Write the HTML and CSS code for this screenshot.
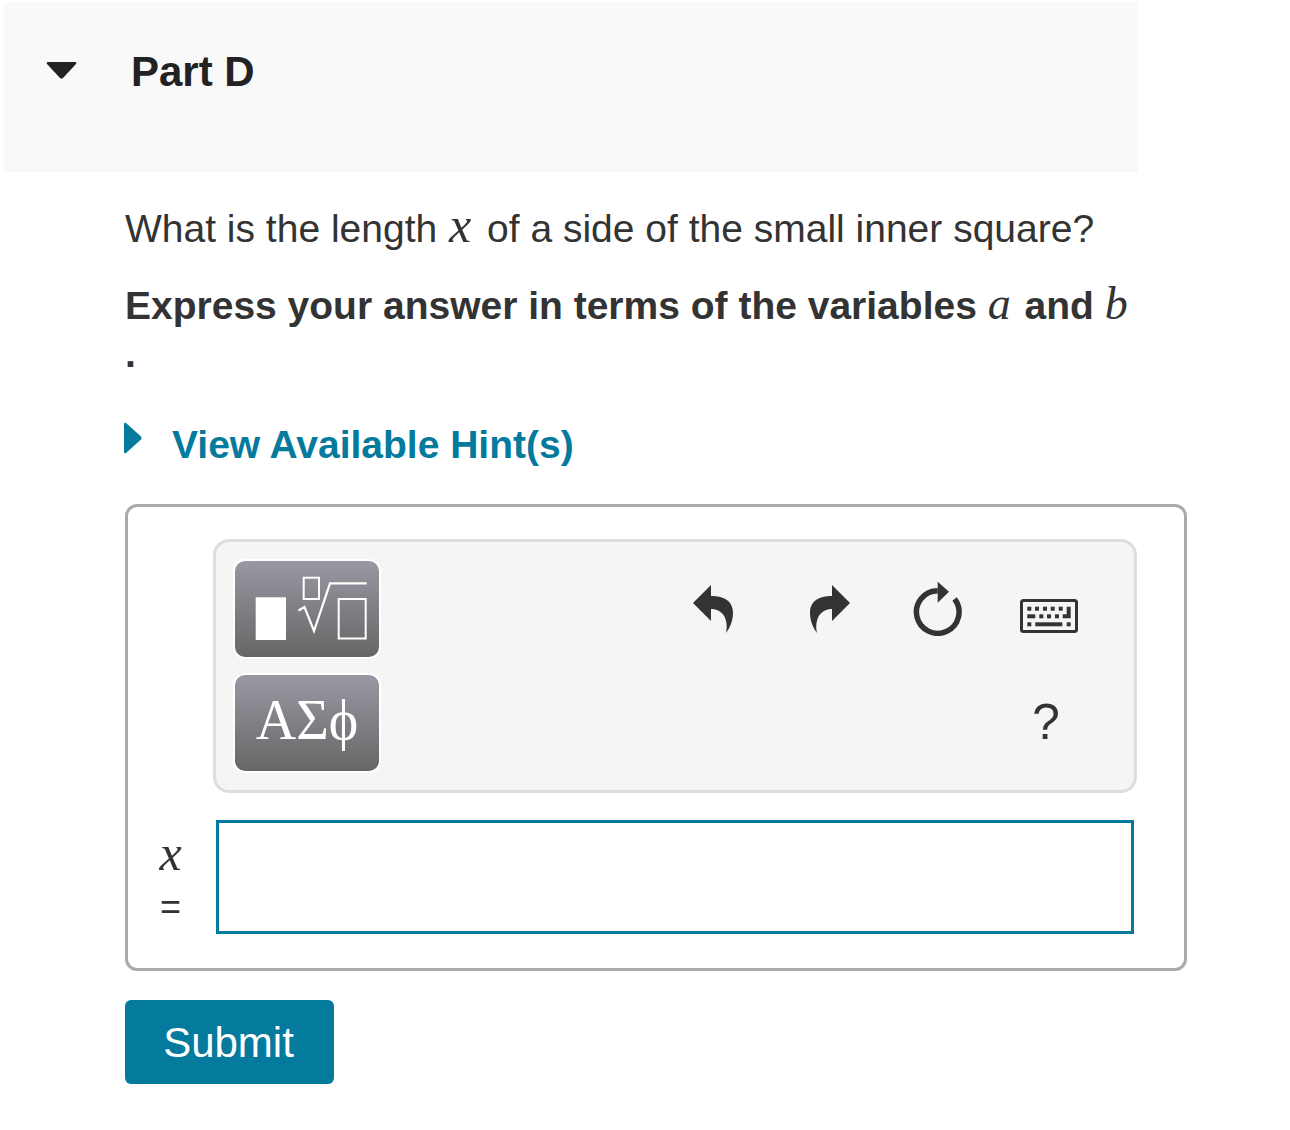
FILE: index.html
```html
<!DOCTYPE html>
<html lang="en">
<head>
    <meta charset="UTF-8">
    <title>Part D</title>
    <link rel="stylesheet" href="styles.css">
</head>
<body>
    <!-- Part header -->
    <header class="part_head">
        <svg class="part_arrow" width="32" height="18" viewBox="0 0 32 18"><path d="M2 1 H29 Q31 1 30 3 L17 17 Q15.500 18 14 17 L1 3 Q0 1 2 1 Z" fill="#222"/></svg>
        <h2 class="part_title">Part D</h2>
    </header>

    <main class="part_body">
        <p class="question">What is the length <span class="math math_x">x</span> of a side of the small inner square?</p>
        <p class="instruction">Express your answer in terms of the variables <span class="math">a</span> and <span class="math">b</span><br>.</p>

        <!-- Hint toggle -->
        <a class="hint" href="#">
            <svg class="hint_arrow" width="18" height="32" viewBox="0 0 18 32"><path d="M0 2 Q0 0 2 1 L17 14.500 Q18 16 17 17.500 L2 31 Q0 32 0 30 Z" fill="#047a9c"/></svg>
            <span>View Available Hint(s)</span>
        </a>

        <!-- Answer box with math toolbar -->
        <section class="answer_box">
            <div class="toolbar">
                <div class="palette">
                    <button class="pal_btn" type="button">
                        <svg width="144" height="96" viewBox="0 0 144 96">
                            <rect x="20.700" y="36.300" width="30.300" height="42.700" fill="#fff"/>
                            <rect x="68.700" y="16.700" width="15.300" height="21.300" fill="none" stroke="#fff" stroke-width="2"/>
                            <rect x="103.700" y="38" width="27" height="39.500" fill="none" stroke="#fff" stroke-width="2"/>
                            <path d="M63.500 49.500 L69.500 46 L79 70 L95 22.300 H131.700" fill="none" stroke="#fff" stroke-width="2.200"/>
                        </svg>
                    </button>
                    <button class="pal_btn pal_text" type="button">ΑΣϕ</button>
                </div>
                <div class="tools">
                    <div class="tool_row">
                        <svg class="ic_undo" width="42" height="50" viewBox="0 0 42 50"><path d="M1 19 L19 1 V12 C32 12 41 17 41 29 C41 38 37 45 34 49 C36 40 34 31 27 27 C24 25.500 22 25 19 25 V37 Z" fill="#333"/></svg>
                        <svg class="ic_redo" width="42" height="50" viewBox="0 0 42 50"><path d="M41 19 L23 1 V12 C10 12 1 17 1 29 C1 38 5 45 8 49 C6 40 8 31 15 27 C18 25.500 20 25 23 25 V37 Z" fill="#333"/></svg>
                        <svg class="ic_reset" width="50" height="56" viewBox="0 0 50 56">
                            <path d="M41.600 19 A21.300 21.300 0 1 1 24.700 10.700" fill="none" stroke="#333" stroke-width="5.500"/>
                            <path d="M24.700 1.700 L36 11.700 L24.700 22.700 Z" fill="#333"/>
                        </svg>
                        <svg class="ic_keys" width="58" height="34" viewBox="0 0 58 34">
                            <rect x="1.500" y="1.500" width="55" height="31" rx="2" fill="none" stroke="#333" stroke-width="3"/>
                            <g fill="#333">
                                <rect x="7.300" y="7.700" width="4" height="4"/>
                                <rect x="15" y="7.700" width="4" height="4"/>
                                <rect x="23" y="7.700" width="4" height="4"/>
                                <rect x="30.700" y="7.700" width="4" height="4"/>
                                <rect x="38.700" y="7.700" width="4" height="4"/>
                                <path d="M46.700 7.700 H50.700 V19.300 H42.700 V15.300 H46.700 Z"/>
                                <rect x="7.300" y="15.300" width="8" height="4"/>
                                <rect x="19.300" y="15.300" width="4" height="4"/>
                                <rect x="27" y="15.300" width="4" height="4"/>
                                <rect x="35" y="15.300" width="4" height="4"/>
                                <rect x="7.300" y="23.300" width="4" height="4"/>
                                <rect x="15.300" y="23.300" width="27" height="4"/>
                                <rect x="46.700" y="23.300" width="4" height="4"/>
                            </g>
                        </svg>
                    </div>
                    <div class="help_row"><span class="help">?</span></div>
                </div>
            </div>
            <div class="answer_row">
                <div class="var_label"><span class="math">x</span><span class="equals">=</span></div>
                <input class="answer_input" type="text" aria-label="x">
            </div>
        </section>

        <button class="submit" type="button">Submit</button>
    </main>
</body>
</html>
```

FILE: styles.css
```css
/* Page base */
body {
    margin: 0;
    background-color: #fff;
    font-family: "Liberation Sans", Arial, sans-serif;
    color: #333;
}
/* Grey bar holding the part name */
.part_head {
    display: flex;
    align-items: flex-start;
    box-sizing: border-box;
    width: 1134px;
    height: 170px;
    margin: 2px 0 0 4px;
    background-color: #f9f9f9;
}
.part_arrow {
    margin: 59px 0 0 42px;
}
.part_title {
    margin: 45px 0 0 53px;
    font-size: 42px;
    line-height: 50px;
    font-weight: bold;
    color: #222;
}
/* Everything under the header */
.part_body {
    padding-left: 125px;
    width: 1062px;
}
.math {
    font-family: "Liberation Serif", serif;
    font-size: 46px;
    line-height: 0;
    font-style: italic;
    font-weight: normal;
    margin-right: 3px;
}
.math_x {
    font-size: 50px;
    margin: 0 5px 0 1px;
}
.question {
    margin: 33px 0 0;
    font-size: 39px;
    line-height: 48px;
}
.instruction {
    margin: 29px 0 0;
    font-size: 39px;
    line-height: 48px;
    font-weight: bold;
}
/* Hint link */
.hint {
    display: flex;
    align-items: flex-start;
    margin-top: 43px;
    font-size: 39px;
    line-height: 48px;
    font-weight: bold;
    color: #047a9c;
    text-decoration: none;
}
.hint_arrow {
    margin: 1px 30px 0 -1px;
}
/* Answer box */
.answer_box {
    box-sizing: border-box;
    height: 467px;
    margin-top: 35px;
    padding: 32px 47px 0 85px;
    border: 3px solid #aaa;
    border-radius: 12px;
}
.toolbar {
    display: flex;
    box-sizing: border-box;
    height: 254px;
    padding: 17px 0 0 17px;
    border: 3px solid #ddd;
    border-radius: 16px;
    background-color: #f5f5f5;
}
.palette {
    display: flex;
    flex-direction: column;
    gap: 14px;
}
.pal_btn {
    display: block;
    box-sizing: content-box;
    width: 144px;
    height: 96px;
    padding: 0;
    border: 2px solid #fff;
    border-radius: 12px;
    background: linear-gradient(#9a98a3, #666);
}
.pal_btn svg {
    display: block;
}
.pal_text {
    height: 90px;
    padding-bottom: 6px;
    font-family: "Liberation Serif", serif;
    font-size: 56px;
    line-height: 90px;
    color: #fff;
}
.tools {
    flex: 1;
}
.tool_row {
    display: flex;
    align-items: flex-start;
    padding-top: 25px;
}
.ic_undo {
    margin-left: 311px;
}
.ic_redo {
    margin-left: 75px;
}
.ic_reset {
    margin: -4px 0 0 62px;
}
.ic_keys {
    margin: 15px 0 0 57px;
}
.help_row {
    margin-top: 56px;
    padding-left: 651px;
    font-size: 50px;
    line-height: 60px;
}
/* Answer row */
.answer_row {
    display: flex;
    margin-top: 27px;
}
.var_label {
    display: flex;
    flex-direction: column;
    align-items: center;
    width: 85px;
    margin-left: -85px;
    padding-top: 8px;
    font-size: 40px;
    line-height: 50px;
}
.var_label .math {
    font-size: 50px;
    line-height: 50px;
    margin-right: 0;
}
.equals {
    margin-top: 4px;
    font-size: 36px;
}
.answer_input {
    box-sizing: border-box;
    width: 918px;
    height: 114px;
    border: 3px solid #047a9c;
    background-color: #fff;
    margin-left: 3px;
}
/* Submit button */
.submit {
    display: block;
    width: 209px;
    height: 84px;
    margin-top: 29px;
    padding: 2px 2px 0 0;
    border: none;
    border-radius: 6px;
    background-color: #047a9c;
    color: #fff;
    font-family: "Liberation Sans", Arial, sans-serif;
    font-size: 42px;
}
```
